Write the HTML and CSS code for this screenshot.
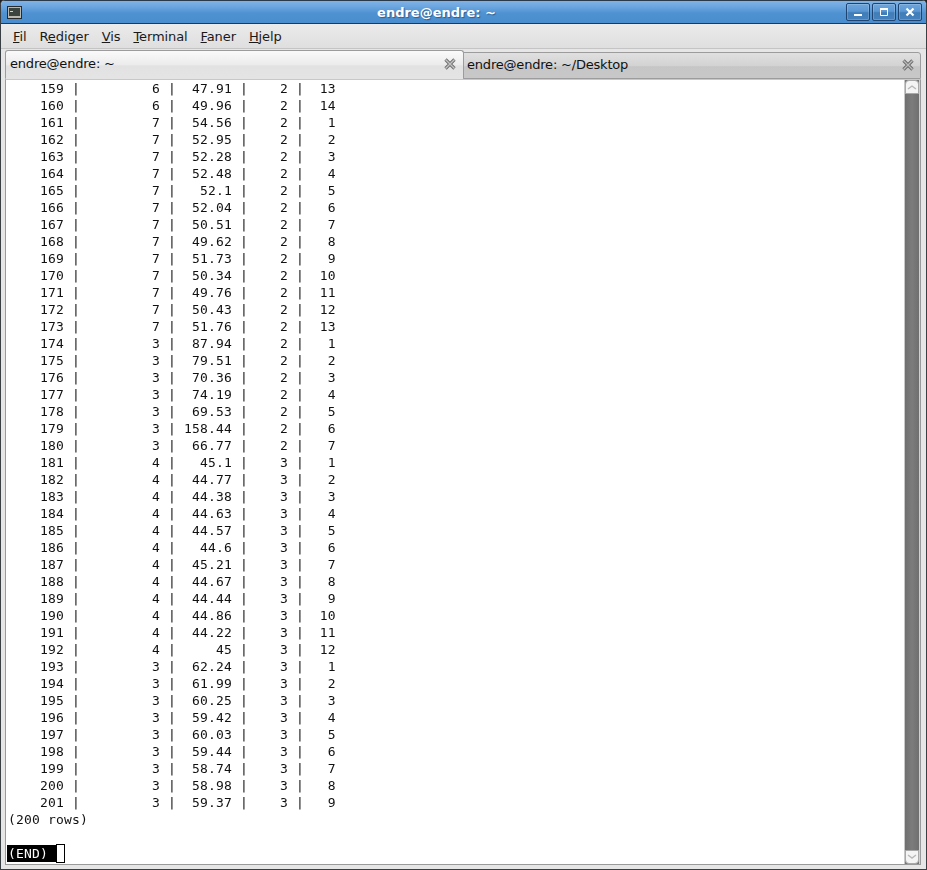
FILE: index.html
```html
<!DOCTYPE html>
<html lang="da">
<head>
<meta charset="utf-8">
<title>endre@endre: ~</title>
<link rel="stylesheet" href="styles.css">
</head>
<body>
<div class="window">
  <header class="titlebar">
    <svg class="app-icon" width="15" height="13" viewBox="0 0 15 13"><rect x="0.5" y="0.5" width="14" height="12" fill="#b8b8b0" stroke="#2a2a2a"/><rect x="2" y="2" width="11" height="8" fill="#3c4440"/><rect x="3" y="5" width="3" height="1" fill="#cfd6d0"/></svg>
    <div class="title">endre@endre: ~</div>
    <div class="wm-buttons">
      <div class="wm-btn"><svg width="10" height="10" viewBox="0 0 10 10"><rect x="1" y="7" width="8" height="2" fill="#fff"/></svg></div>
      <div class="wm-btn"><svg width="10" height="10" viewBox="0 0 10 10"><path d="M1.5 2.5h7v6h-7z" fill="none" stroke="#fff"/><rect x="1" y="1" width="8" height="2" fill="#fff"/></svg></div>
      <div class="wm-btn"><svg width="10" height="10" viewBox="0 0 10 10"><path d="M1.5 1.5l7 7M8.5 1.5l-7 7" stroke="#fff" stroke-width="2.2" fill="none"/></svg></div>
    </div>
  </header>
  <nav class="menubar">
    <span class="menu"><u>F</u>il</span>
    <span class="menu">R<u>e</u>diger</span>
    <span class="menu"><u>V</u>is</span>
    <span class="menu"><u>T</u>erminal</span>
    <span class="menu"><u>F</u>aner</span>
    <span class="menu"><u>H</u>jelp</span>
  </nav>
  <div class="tabs">
    <div class="tab active"><span class="tab-label">endre@endre: ~</span>
      <svg class="tab-x" width="14" height="14" viewBox="0 0 14 14"><path d="M2.5 2.5l9 9M11.5 2.5l-9 9" stroke="#6e6e6e" stroke-width="3.2" fill="none"/><path d="M2.5 2.5l9 9M11.5 2.5l-9 9" stroke="#c4c4c4" stroke-width="1.4" fill="none"/></svg>
    </div>
    <div class="tab inactive"><span class="tab-label">endre@endre: ~/Desktop</span>
      <svg class="tab-x" width="14" height="14" viewBox="0 0 14 14"><path d="M2.5 2.5l9 9M11.5 2.5l-9 9" stroke="#6a6a6a" stroke-width="3.2" fill="none"/><path d="M2.5 2.5l9 9M11.5 2.5l-9 9" stroke="#bcbcbc" stroke-width="1.4" fill="none"/></svg>
    </div>
  </div>
  <main class="term-frame">
    <pre class="terminal">    159 |         6 |  47.91 |    2 |  13
    160 |         6 |  49.96 |    2 |  14
    161 |         7 |  54.56 |    2 |   1
    162 |         7 |  52.95 |    2 |   2
    163 |         7 |  52.28 |    2 |   3
    164 |         7 |  52.48 |    2 |   4
    165 |         7 |   52.1 |    2 |   5
    166 |         7 |  52.04 |    2 |   6
    167 |         7 |  50.51 |    2 |   7
    168 |         7 |  49.62 |    2 |   8
    169 |         7 |  51.73 |    2 |   9
    170 |         7 |  50.34 |    2 |  10
    171 |         7 |  49.76 |    2 |  11
    172 |         7 |  50.43 |    2 |  12
    173 |         7 |  51.76 |    2 |  13
    174 |         3 |  87.94 |    2 |   1
    175 |         3 |  79.51 |    2 |   2
    176 |         3 |  70.36 |    2 |   3
    177 |         3 |  74.19 |    2 |   4
    178 |         3 |  69.53 |    2 |   5
    179 |         3 | 158.44 |    2 |   6
    180 |         3 |  66.77 |    2 |   7
    181 |         4 |   45.1 |    3 |   1
    182 |         4 |  44.77 |    3 |   2
    183 |         4 |  44.38 |    3 |   3
    184 |         4 |  44.63 |    3 |   4
    185 |         4 |  44.57 |    3 |   5
    186 |         4 |   44.6 |    3 |   6
    187 |         4 |  45.21 |    3 |   7
    188 |         4 |  44.67 |    3 |   8
    189 |         4 |  44.44 |    3 |   9
    190 |         4 |  44.86 |    3 |  10
    191 |         4 |  44.22 |    3 |  11
    192 |         4 |     45 |    3 |  12
    193 |         3 |  62.24 |    3 |   1
    194 |         3 |  61.99 |    3 |   2
    195 |         3 |  60.25 |    3 |   3
    196 |         3 |  59.42 |    3 |   4
    197 |         3 |  60.03 |    3 |   5
    198 |         3 |  59.44 |    3 |   6
    199 |         3 |  58.74 |    3 |   7
    200 |         3 |  58.98 |    3 |   8
    201 |         3 |  59.37 |    3 |   9
(200 rows)

<span class="end">(END)</span><span class="cursor"> </span></pre>
    <aside class="scrollbar">
      <div class="sb-btn sb-up"><svg width="10" height="6" viewBox="0 0 10 6"><path d="M1 5l4-3 4 3" stroke="#b8b8b8" stroke-width="1.4" fill="none"/></svg></div>
      <div class="sb-trough"></div>
      <div class="sb-btn sb-down"><svg width="10" height="6" viewBox="0 0 10 6"><path d="M1 1l4 3 4-3" stroke="#b8b8b8" stroke-width="1.4" fill="none"/></svg></div>
    </aside>
  </main>
</div>
</body>
</html>
```
FILE: styles.css
```css
* { box-sizing: border-box; }
html, body { margin: 0; padding: 0; }
body { width: 927px; height: 870px; overflow: hidden; background: #222; }
.window {
  width: 927px; height: 870px;
  display: flex; flex-direction: column;
  background: #e6e6e6;
  border-left: 1px solid #3a3f44;
  border-right: 1px solid #3a3f44;
  border-bottom: 1px solid #3a3f44;
  border-radius: 5px 5px 0 0;
  overflow: hidden;
  font-family: "DejaVu Sans", sans-serif;
  font-size: 13px; color: #111;
}
.titlebar {
  height: 24px; flex: none;
  display: flex; align-items: center;
  padding: 0 4px 0 6px;
  background: linear-gradient(#7fb3e6 0, #6ba5df 6px, #4f92d2 12px, #4a8dce 100%);
  border-top: 1px solid #2a3a4a;
  border-bottom: 1px solid #1f3a58;
}
.app-icon { flex: none; }
.title {
  flex: 1; text-align: center;
  color: #fff; font-weight: bold; font-size: 13px;
  text-shadow: 1px 1px 1px #2b5d90;
  padding-left: 5px;
}
.wm-buttons { display: flex; gap: 2px; }
.wm-btn {
  width: 24px; height: 18px;
  display: flex; align-items: center; justify-content: center;
  border: 1px solid #1f4470; border-radius: 2px;
  background: linear-gradient(#6ea6dc 0, #5a97d3 45%, #3f7db9 55%, #4681bd 100%);
  box-shadow: inset 0 0 0 1px rgba(255,255,255,.18);
}
.menubar {
  height: 25px; flex: none;
  display: flex; align-items: center;
  gap: 13px;
  padding: 1px 0 0 12px;
  background: linear-gradient(#ebebeb, #dfdfdf);
  border-bottom: 1px solid #c4c4c4;
}
.menu { font-size: 13px; color: #1a1a1a; letter-spacing: -0.1px; }
.tabs {
  height: 30px; flex: none;
  display: flex; align-items: flex-end;
  padding: 0 5px 0 4px;
  background: #e6e6e6;
}
.tab {
  display: flex; align-items: center; justify-content: space-between;
  border: 1px solid #9c9c9c; border-bottom: none;
  border-radius: 3px 3px 0 0;
  font-size: 13px; color: #111;
}
.tab-label { letter-spacing: -0.2px; margin-top: -2px; }
.tab-x { flex: none; margin-top: -2px; }
.tab.active {
  width: 459px; height: 29px;
  padding: 0 6px 0 4px;
  background: linear-gradient(#fafafa, #ececec 50%, #e2e2e2 55%, #e4e4e4);
  border-bottom: 1px solid #e4e4e4;
}
.tab.inactive {
  flex: 1; height: 27px;
  border-radius: 0 3px 0 0;
  padding: 0 5px 0 3px;
  background: linear-gradient(#e0e0e0, #d3d3d3 50%, #c6c6c6 55%, #c8c8c8);
  border-bottom: 1px solid #9c9c9c;
  margin-left: -1px;
}
.term-frame {
  flex: 1; min-height: 0;
  display: flex;
  margin: 0 5px 4px 4px;
  border: 1px solid #9a9a9a;
  border-top: 1px solid #c8c8c8;
  background: #fff;
}
.terminal {
  flex: 1; margin: 0; padding: 0 0 0 2px;
  font-family: "DejaVu Sans Mono", monospace;
  font-size: 13px; line-height: 17px;
  letter-spacing: 0.17px;
  color: #111; overflow: hidden;
  will-change: transform;
}
.end { background: #000; color: #fff; display: inline-block; width: 49px; margin-left: -1px; padding-left: 1px; }
.cursor { display: inline-block; width: 9px; height: 19px; vertical-align: top; margin-top: -1px; background: #fff; border: 1px solid #000; }
.scrollbar {
  width: 16px; flex: none;
  display: flex; flex-direction: column;
  background: #777;
  border-left: 1px solid #c8c8c8;
  border-right: 1px solid #d0d0d0;
}
.sb-btn {
  height: 14px; flex: none;
  display: flex; align-items: center; justify-content: center;
  background: #f4f4f4;
  border: 1px solid #a8a8a8;
}
.sb-up { border-radius: 4px 4px 0 0; }
.sb-down { border-radius: 0 0 4px 4px; }
.sb-trough { flex: 1; background: linear-gradient(90deg, #6f6f6f, #7c7c7c 50%, #6f6f6f); }
```
